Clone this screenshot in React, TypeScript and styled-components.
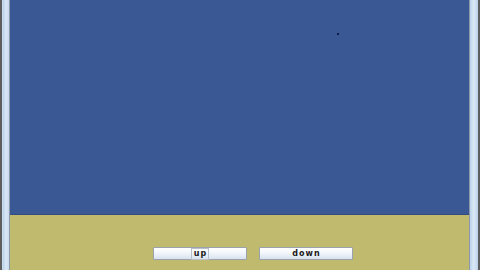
import React from 'react';
import styled, {createGlobalStyle} from 'styled-components';

const GlobalStyle = createGlobalStyle`
  html, body {
    margin: 0;
    padding: 0;
    width: 480px;
    height: 270px;
    overflow: hidden;
    background: #6b6b6b;
  }
`;

const Frame = styled.div`
  width: 480px;
  height: 270px;
  box-sizing: border-box;
  display: flex;
  flex-direction: row;
  background: #5e5e5e;
`;

const Edge = styled.div<{side: 'left' | 'right'}>`
  width: ${p => (p.side === 'left' ? 6 : 7)}px;
  margin-left: ${p => (p.side === 'left' ? 2 : 0)}px;
  margin-right: ${p => (p.side === 'right' ? 2 : 0)}px;
  background: linear-gradient(to right, #b9d1ea, #dbe8f6, #c5d9ee);
  border-left: 1px solid ${p => (p.side === 'right' ? '#8d99a8' : 'transparent')};
  border-right: 1px solid ${p => (p.side === 'left' ? '#8d99a8' : 'transparent')};
`;

const Content = styled.div`
  flex: 1;
  display: flex;
  flex-direction: column;
`;

const Canvas = styled.div`
  height: 214px;
  background: #3a5894;
  border-bottom: 1px solid #344d80;
  position: relative;
`;

const Dot = styled.div`
  position: absolute;
  left: 327px;
  top: 33px;
  width: 2px;
  height: 2px;
  background: #0c1f4a;
`;

const ButtonBar = styled.div`
  flex: 1;
  background: #c0ba6e;
  display: flex;
  justify-content: flex-start;
  align-items: flex-end;
  gap: 12px;
  padding-bottom: 10px;
  padding-left: 143px;
`;

const Button = styled.button`
  width: 94px;
  height: 13px;
  padding: 0;
  border: 1px solid #9aa3ab;
  border-radius: 1px;
  background: linear-gradient(to bottom, #ffffff 0%, #f2f6fb 45%, #d7e2ee 100%);
  font-family: "DejaVu Sans", sans-serif;
  font-weight: bold;
  font-size: 8px;
  letter-spacing: 1px;
  color: #1a1a1a;
  display: flex;
  justify-content: center;
  align-items: center;
`;

const Label = styled.span<{focused?: boolean}>`
  padding: 0 1px 0 2px;
  outline: ${p => (p.focused ? '1px solid #b8bfc8' : 'none')};
  line-height: 10px;
`;

const App = () => {
  return (
    <>
      <GlobalStyle />
      <Frame>
        <Edge side="left" />
        <Content>
          <Canvas>
            <Dot />
          </Canvas>
          <ButtonBar>
            <Button><Label focused>up</Label></Button>
            <Button><Label>down</Label></Button>
          </ButtonBar>
        </Content>
        <Edge side="right" />
      </Frame>
    </>
  );
};

export default App;
